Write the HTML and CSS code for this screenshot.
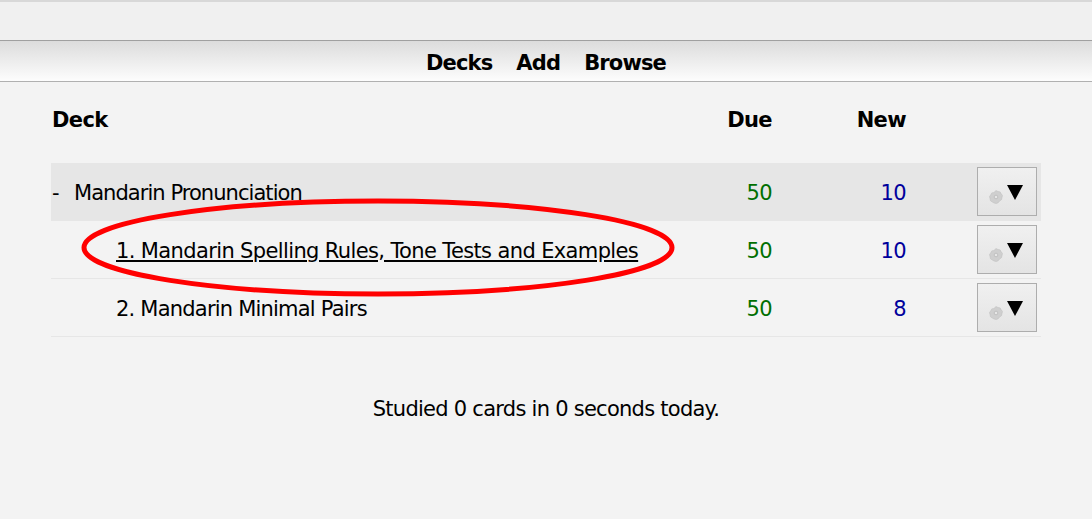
FILE: index.html

```html
<!DOCTYPE html>
<html lang="en">
<head>
  <meta charset="UTF-8">
  <title>Decks</title>
  <link rel="stylesheet" href="styles.css">
</head>
<body>

  <div class="titlebar"></div>

  <div class="toolbar">
    <a class="nav-link" href="#">Decks</a>
    <a class="nav-link" href="#">Add</a>
    <a class="nav-link" href="#">Browse</a>
  </div>

  <div class="deck-list">
    <div class="deck-row deck-head">
      <div class="deck-name">Deck</div>
      <div class="deck-due">Due</div>
      <div class="deck-new">New</div>
      <div class="deck-opts"></div>
    </div>

    <div class="deck-row deck-parent">
      <div class="deck-name"><span class="collapse">-</span>Mandarin Pronunciation</div>
      <div class="deck-due count-due">50</div>
      <div class="deck-new count-new">10</div>
      <div class="deck-opts">
        <button class="opts-btn" type="button">
          <svg class="gear" viewBox="0 0 14 14"><path d="M7 .5l2 1 2.200.4 1 1.900 1.300 1.700-.5 2-.5 2.200-1.800 1.200L8.900 13 7 13.500 5 13l-1.800-1.100-1.800-1.200L1 8.500.5 6.600l1.200-1.700 1-2 2.200-.4z"/><circle cx="7" cy="7" r="1.800"/></svg>
          <span class="arrow"></span>
        </button>
      </div>
    </div>

    <div class="deck-row deck-child">
      <div class="deck-name"><a class="deck-link" href="#">1. Mandarin Spelling Rules, Tone Tests and Examples</a></div>
      <div class="deck-due count-due">50</div>
      <div class="deck-new count-new">10</div>
      <div class="deck-opts">
        <button class="opts-btn" type="button">
          <svg class="gear" viewBox="0 0 14 14"><path d="M7 .5l2 1 2.200.4 1 1.900 1.300 1.700-.5 2-.5 2.200-1.800 1.200L8.900 13 7 13.500 5 13l-1.800-1.100-1.800-1.200L1 8.500.5 6.600l1.200-1.700 1-2 2.200-.4z"/><circle cx="7" cy="7" r="1.800"/></svg>
          <span class="arrow"></span>
        </button>
      </div>
    </div>

    <div class="deck-row deck-child">
      <div class="deck-name deck-name-short">2. Mandarin Minimal Pairs</div>
      <div class="deck-due count-due">50</div>
      <div class="deck-new count-new">8</div>
      <div class="deck-opts">
        <button class="opts-btn" type="button">
          <svg class="gear" viewBox="0 0 14 14"><path d="M7 .5l2 1 2.200.4 1 1.900 1.300 1.700-.5 2-.5 2.200-1.800 1.200L8.900 13 7 13.500 5 13l-1.800-1.100-1.800-1.200L1 8.500.5 6.600l1.200-1.700 1-2 2.200-.4z"/><circle cx="7" cy="7" r="1.800"/></svg>
          <span class="arrow"></span>
        </button>
      </div>
    </div>
  </div>

  <p class="studied">Studied 0 cards in 0 seconds today.</p>

  <svg class="annotation" width="604" height="106" viewBox="0 0 604 106">
    <ellipse cx="302" cy="52.500" rx="294" ry="46.500" fill="none" stroke="#ff0000" stroke-width="5"/>
  </svg>

</body>
</html>
```

FILE: styles.css

```css
body {
  margin: 0;
  height: 519px;
  overflow: hidden;
  position: relative;
  background-color: #f3f3f3;
  color: #000;
  font-family: "DejaVu Sans", sans-serif;
  font-size: 21px;
  letter-spacing: -0.63px;
}
.titlebar {
  height: 40px;
  box-sizing: border-box;
  border-top: 2px solid #d8d8d8;
  background-color: #f0f0f0;
}
.toolbar {
  height: 42px;
  box-sizing: border-box;
  padding-top: 3px;
  border-top: 1px solid #a0a0a0;
  border-bottom: 1px solid #b0b0b0;
  background: linear-gradient(#dcdcdc, #fdfdfd);
  display: flex;
  justify-content: center;
  align-items: center;
  gap: 24px;
}
.nav-link {
  color: #000;
  font-weight: bold;
  letter-spacing: -0.85px;
  text-decoration: none;
}
.deck-list {
  margin: 0 51px;
}
.deck-row {
  display: flex;
  align-items: center;
  height: 58px;
  box-sizing: border-box;
}
.deck-head {
  height: 81px;
  padding-bottom: 6px;
  font-weight: bold;
}
.deck-parent {
  padding-bottom: 1px;
  background-color: #e6e6e6;
}
.deck-child {
  border-bottom: 1px solid #e6e6e6;
}
.deck-name {
  flex: 1;
  padding-left: 1px;
  white-space: nowrap;
}
.deck-parent .deck-name {
  letter-spacing: -0.95px;
}
.deck-child .deck-name {
  padding-left: 65px;
}
.deck-child .deck-name-short {
  letter-spacing: -0.79px;
}
.deck-parent .deck-name,
.deck-child .deck-name,
.deck-parent .deck-due,
.deck-child .deck-due,
.deck-parent .deck-new,
.deck-child .deck-new {
  padding-top: 2px;
}
.collapse {
  display: inline-block;
  width: 22px;
}
.deck-link {
  color: #000;
}
.deck-due {
  width: 80px;
  text-align: right;
}
.deck-new {
  width: 134px;
  text-align: right;
}
.deck-opts {
  width: 135px;
  display: flex;
  justify-content: flex-end;
  padding-right: 4px;
  box-sizing: border-box;
}
.count-due {
  color: #006f00;
}
.count-new {
  color: #00009c;
}
.opts-btn {
  position: relative;
  width: 60px;
  height: 49px;
  padding: 0;
  border: 1px solid #adadad;
  background: linear-gradient(#f0f0f0, #e4e4e4);
}
.gear {
  position: absolute;
  left: 11px;
  top: 22px;
  width: 14px;
  height: 14px;
  fill: #cfcfcf;
  stroke: #bdbdbd;
  stroke-width: 0.5;
}
.gear circle {
  fill: #e6e6e6;
  stroke: #a8a8a8;
}
.arrow {
  position: absolute;
  left: 29px;
  top: 17px;
  width: 0;
  height: 0;
  border-left: 8px solid transparent;
  border-right: 8px solid transparent;
  border-top: 15px solid #000;
}
.studied {
  margin: 60px 0 0;
  letter-spacing: -0.74px;
  text-align: center;
}
.annotation {
  position: absolute;
  left: 76px;
  top: 195px;
}
```
